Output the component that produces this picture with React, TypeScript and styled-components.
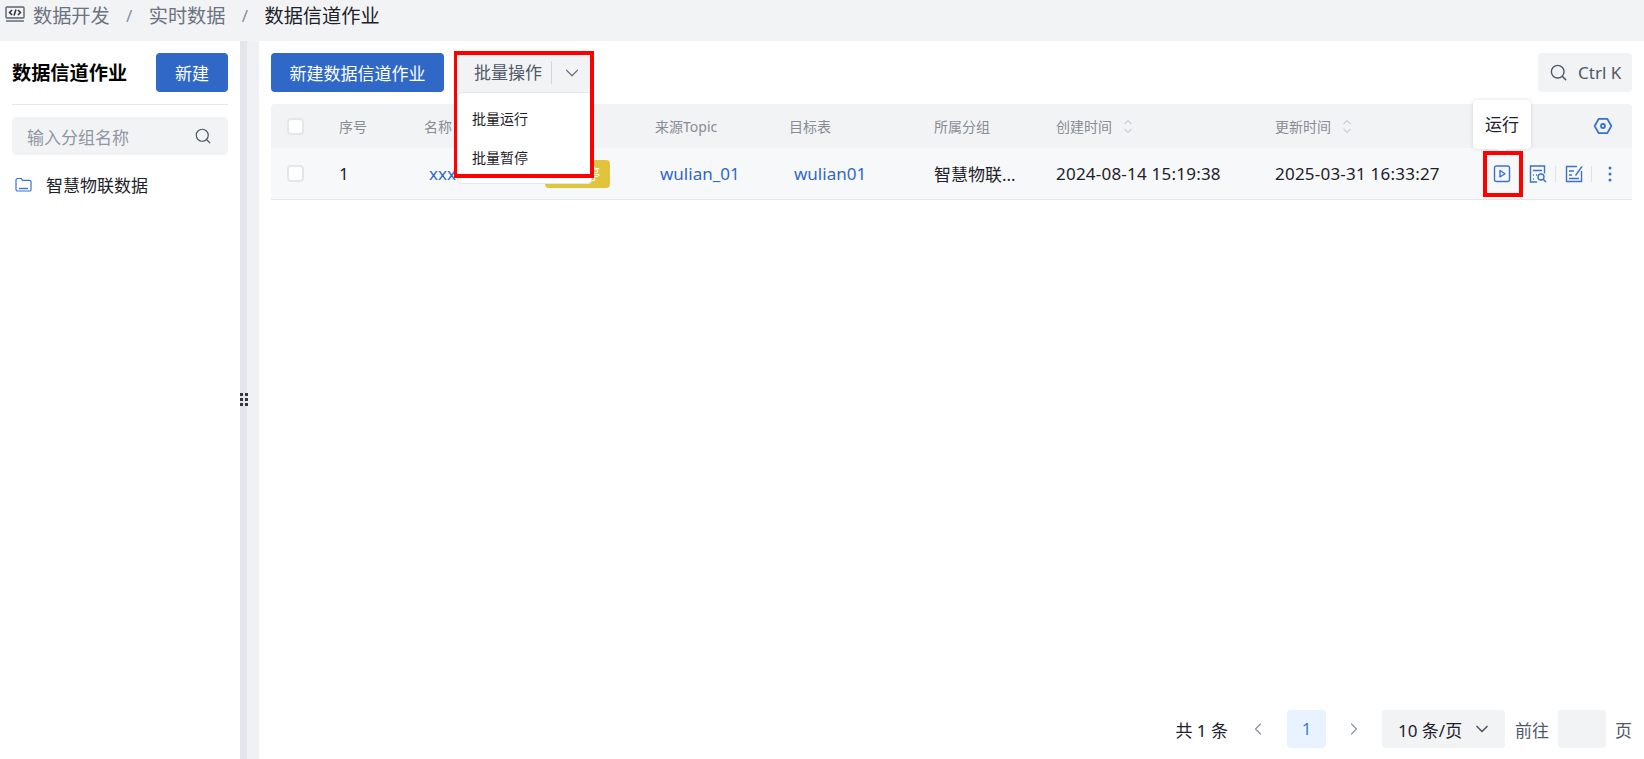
import { createGlobalStyle, styled } from 'styled-components';
import { ChevronDown, ChevronLeft, ChevronRight, Search } from 'lucide-react';

const GlobalStyle = createGlobalStyle`
    html, body {
        margin: 0;
        height: 100%;
        overflow: hidden;
    }
    body {
        font-family: "Noto Sans", "Noto Sans CJK SC", sans-serif;
        color: #1d2129;
    }
`;

const COLUMNS = '52px 85px 121px 110px 134px 145px 122px 219px 220px 153px';
const BLUE = '#2f68c6';
const ICON_BLUE = '#3a72cc';

const Page = styled.div`
    width: 1644px;
    height: 759px;
    background: #f2f3f5;
    display: flex;
    flex-direction: column;
`;

const Crumbs = styled.nav`
    height: 41px;
    flex: none;
    box-sizing: border-box;
    padding: 0 0 11px 5px;
    display: flex;
    align-items: center;
    font-size: 19.2px;
    color: #6b7280;
    svg {
        margin-right: 8px;
    }
`;

const Crumb = styled.span<{ $current?: boolean }>`
    color: ${(p) => (p.$current ? '#1d2129' : '#6b7280')};
`;

const CrumbSep = styled.span`
    width: 39px;
    text-align: center;
    color: #86909c;
    font-size: 17px;
`;

const Body = styled.div`
    flex: 1;
    display: flex;
    min-height: 0;
`;

const Sidebar = styled.aside`
    width: 240px;
    flex: none;
    box-sizing: border-box;
    background: #fff;
    padding: 12px 12px 0;
`;

const SideHead = styled.div`
    height: 39px;
    padding-bottom: 12px;
    border-bottom: 1px solid #e5e6eb;
    display: flex;
    align-items: flex-start;
    justify-content: space-between;
`;

const SideTitle = styled.h2`
    margin: 0;
    line-height: 39px;
    font-size: 19.2px;
    font-weight: 700;
    color: #000;
`;

const PrimaryButton = styled.button<{ $wide?: boolean }>`
    height: 39px;
    width: ${(p) => (p.$wide ? '173px' : '72px')};
    border: 0;
    border-radius: 4px;
    background: ${BLUE};
    color: #fff;
    font: inherit;
    font-size: 17px;
    padding: 0;
`;

const SideSearch = styled.div`
    height: 38px;
    margin-top: 12px;
    box-sizing: border-box;
    padding: 0 16px 0 15px;
    border-radius: 4px;
    background: #f2f3f5;
    display: flex;
    align-items: center;
    justify-content: space-between;
    font-size: 17px;
    color: #9097a3;
    svg {
        color: #4e5969;
    }
`;

const TreeItem = styled.div`
    margin-top: 11px;
    height: 36px;
    display: flex;
    align-items: center;
    gap: 14px;
    padding-left: 3px;
    font-size: 17px;
    color: #1d2129;
`;

const Splitter = styled.div`
    width: 19px;
    flex: none;
    display: flex;
    position: relative;
`;

const SplitLeft = styled.div`
    width: 7px;
    background: #e3e5ec;
`;

const SplitRight = styled.div`
    flex: 1;
    background: #f0f1f5;
`;

const Grip = styled.div`
    position: absolute;
    left: 0;
    top: 352px;
    display: grid;
    grid-template-columns: 3px 3px;
    gap: 2px;
    i {
        width: 3px;
        height: 3px;
        background: #33363d;
    }
`;

const Main = styled.main`
    flex: 1;
    min-width: 0;
    background: #fff;
    box-sizing: border-box;
    padding: 12px 12px 0;
    display: flex;
    flex-direction: column;
`;

const Toolbar = styled.div`
    height: 39px;
    flex: none;
    display: flex;
    align-items: center;
    gap: 13px;
`;

const BatchGroup = styled.div`
    position: relative;
    height: 39px;
    width: 135px;
    background: #f2f3f5;
    border-radius: 4px;
    display: flex;
    align-items: center;
    box-sizing: border-box;
    padding-left: 17px;
    font-size: 17px;
    color: #4e5969;
    z-index: 3;
`;

const BatchLabel = styled.span`
    padding-right: 9px;
    border-right: 1px solid #d4d6dc;
    line-height: 23px;
`;

const BatchCaret = styled.span`
    display: flex;
    margin-left: 9px;
    color: #6b7280;
`;

const Menu = styled.div`
    position: absolute;
    left: 0;
    top: 39px;
    width: 135px;
    height: 92px;
    box-sizing: border-box;
    background: #fff;
    border: 1px solid #e5e6eb;
    border-radius: 4px;
    padding: 6px 0;
`;

const MenuItem = styled.div`
    height: 39px;
    line-height: 39px;
    padding-left: 14px;
    font-size: 14px;
    color: #1d2129;
`;

const RedFrame = styled.div`
    position: absolute;
    box-sizing: border-box;
    border: 4px solid #f00;
    pointer-events: none;
    z-index: 5;
`;

const BatchFrame = styled(RedFrame)`
    left: -3px;
    top: -2px;
    width: 140px;
    height: 127px;
    border-left-width: 3px;
`;

const Spacer = styled.div`
    flex: 1;
`;

const QuickSearch = styled.div`
    width: 94px;
    height: 39px;
    box-sizing: border-box;
    padding-left: 11px;
    border-radius: 4px;
    background: #f2f3f5;
    display: flex;
    align-items: center;
    gap: 10px;
    font-size: 17px;
    color: #4e5969;
`;

const Table = styled.div`
    margin-top: 12px;
`;

const HeadRow = styled.div`
    display: grid;
    grid-template-columns: ${COLUMNS};
    height: 44px;
    align-items: center;
    background: #f2f3f5;
    border-radius: 4px 4px 0 0;
    font-size: 14px;
    color: #888c94;
`;

const DataRow = styled.div`
    display: grid;
    grid-template-columns: ${COLUMNS};
    height: 52px;
    box-sizing: border-box;
    align-items: center;
    background: #f7f8fa;
    border-bottom: 1px solid #e5e6eb;
    font-size: 17px;
    color: #1d2129;
`;

const Cell = styled.div`
    padding-left: 16px;
    min-width: 0;
    white-space: nowrap;
    display: flex;
    align-items: center;
`;

const DateCell = styled(Cell)`
    letter-spacing: 0.22px;
`;

const CheckCell = styled.div`
    padding-left: 16px;
    display: flex;
`;

const Check = styled.span`
    width: 13px;
    height: 13px;
    background: #fff;
    border: 2px solid #e5e6eb;
    border-radius: 4px;
`;

const LinkText = styled.span`
    color: ${BLUE};
    padding-left: 5px;
`;

const StatusTag = styled.span`
    height: 28px;
    width: 65px;
    border-radius: 4px;
    background: #e2c43c;
    color: #fff;
    font-size: 15px;
    line-height: 26px;
    text-align: center;
`;

const SortIcon = styled.svg`
    margin-left: 11px;
`;

const Actions = styled.div`
    display: flex;
    align-items: center;
    padding-left: 14px;
    color: ${BLUE};
`;

const ActionButton = styled.span`
    position: relative;
    display: flex;
    width: 18px;
    height: 18px;
`;

const ActionSep = styled.span<{ $hidden?: boolean }>`
    width: 1px;
    height: 16px;
    background: ${(p) => (p.$hidden ? 'transparent' : '#e0e2e7')};
    margin: 1px 9px 0 8px;
`;

const PlayFrame = styled(RedFrame)`
    left: -10px;
    top: -14px;
    width: 40px;
    height: 46px;
`;

const Tooltip = styled.div`
    position: absolute;
    left: -20px;
    top: -65px;
    width: 58px;
    height: 49px;
    box-sizing: border-box;
    background: #fff;
    border-radius: 4px;
    box-shadow: 0 0 4px rgba(0, 0, 0, 0.14);
    color: #1d2129;
    font-size: 17px;
    line-height: 49px;
    text-align: center;
    z-index: 4;
    &::after {
        content: '';
        position: absolute;
        left: 25px;
        bottom: -3px;
        width: 8px;
        height: 8px;
        background: #fff;
        transform: rotate(45deg);
    }
`;

const GearCell = styled.div`
    display: flex;
    justify-content: flex-end;
    padding-right: 19px;
`;

const Pager = styled.footer`
    margin-top: auto;
    height: 38px;
    margin-bottom: 11px;
    display: flex;
    align-items: center;
    justify-content: flex-end;
    font-size: 17px;
    color: #1d2129;
`;

const PagerArrow = styled.span<{ $gap: number }>`
    display: flex;
    color: #9097a3;
    margin-left: ${(p) => p.$gap}px;
`;

const PageNumber = styled.span`
    width: 39px;
    height: 38px;
    margin-left: 19px;
    border-radius: 4px;
    background: #e8f3ff;
    color: #3b7dd8;
    text-align: center;
    line-height: 38px;
`;

const PageSize = styled.div`
    width: 123px;
    height: 38px;
    margin-left: 18px;
    box-sizing: border-box;
    padding: 0 13px 0 16px;
    border-radius: 4px;
    background: #f2f3f5;
    display: flex;
    align-items: center;
    justify-content: space-between;
    svg {
        color: #4e5969;
    }
`;

const PagerText = styled.span<{ $gap: number }>`
    margin-left: ${(p) => p.$gap}px;
    color: #4e5969;
`;

const JumpInput = styled.span`
    width: 48px;
    height: 38px;
    margin-left: 9px;
    border-radius: 4px;
    background: #f2f3f5;
`;

const MonitorIcon = () => (
    <svg width="20" height="20" viewBox="0 0 20 20" fill="none" stroke="#5a6270" strokeWidth="1.4">
        <rect x="1" y="2" width="18" height="11" rx="1" />
        <path d="M1 16h18" />
        <path d="M7 5 4.600 7.500 7 10M13 5l2.400 2.500L13 10M11 4.500 9 10.500" strokeWidth="1.6" stroke="#33363d" />
    </svg>
);

const FolderIcon = () => (
    <svg width="17" height="15" viewBox="0 0 17 15" fill="none" stroke="#3b72d0" strokeWidth="1.2">
        <path d="M1 3a1.500 1.500 0 0 1 1.500-1.500h3.700l1.500 1.800h6.800A1.500 1.500 0 0 1 16 4.800v7.700a1.500 1.500 0 0 1-1.500 1.500h-12A1.500 1.500 0 0 1 1 12.500z" />
        <path d="M4 11.500h9" strokeWidth="1.4" />
    </svg>
);

const SortArrows = () => (
    <SortIcon width="10" height="15" viewBox="0 0 10 15" fill="none" stroke="#c9cdd4" strokeWidth="1.1">
        <path d="M1.500 5 5 1.500 8.500 5M1.500 10 5 13.500 8.500 10" />
    </SortIcon>
);

const GearIcon = () => (
    <svg width="20" height="20" viewBox="0 0 18 18" fill="none" stroke={ICON_BLUE} strokeWidth="1.600">
        <path d="M5.200 2.500h7.600L16.500 9l-3.700 6.500H5.200L1.500 9z" strokeLinejoin="round" />
        <circle cx="9" cy="9" r="1.800" />
    </svg>
);

const PlayIcon = () => (
    <svg width="18" height="18" viewBox="0 0 18 18" fill="none" stroke={ICON_BLUE} strokeWidth="1.400">
        <rect x="1.500" y="1" width="15" height="15.500" rx="2" />
        <path d="M7 5.500v6.500l5-3.250z" strokeLinejoin="round" />
    </svg>
);

const DetailIcon = () => (
    <svg width="18" height="18" viewBox="0 0 18 18" fill="none" stroke={ICON_BLUE} strokeWidth="1.400">
        <path d="M8 17H1.500V1h14v7.500" />
        <path d="M4 5.500h9M4 10h1M7 10h1M4 14h1" />
        <circle cx="12" cy="12" r="3" />
        <path d="m14.200 14.200 2.800 2.800" strokeWidth="1.500" />
    </svg>
);

const EditIcon = () => (
    <svg width="18" height="18" viewBox="0 0 18 18" fill="none" stroke={ICON_BLUE} strokeWidth="1.400">
        <path d="M12 1.500H1.500v15h15V6" />
        <path d="M4 6h5M4 10h3M4 13.500h10M10.500 10.500 17 1.500" />
    </svg>
);

const MoreIcon = () => (
    <svg width="18" height="18" viewBox="0 0 18 18" fill={ICON_BLUE}>
        <circle cx="9" cy="3" r="1.500" />
        <circle cx="9" cy="9" r="1.500" />
        <circle cx="9" cy="15" r="1.500" />
    </svg>
);

const App = () => {
    return (
        <Page>
            <GlobalStyle />
            <Crumbs>
                <MonitorIcon />
                <Crumb>数据开发</Crumb>
                <CrumbSep>/</CrumbSep>
                <Crumb>实时数据</Crumb>
                <CrumbSep>/</CrumbSep>
                <Crumb $current>数据信道作业</Crumb>
            </Crumbs>
            <Body>
                <Sidebar>
                    <SideHead>
                        <SideTitle>数据信道作业</SideTitle>
                        <PrimaryButton>新建</PrimaryButton>
                    </SideHead>
                    <SideSearch>
                        输入分组名称
                        <Search size={18} strokeWidth={1.6} />
                    </SideSearch>
                    <TreeItem>
                        <FolderIcon />
                        智慧物联数据
                    </TreeItem>
                </Sidebar>
                <Splitter>
                    <SplitLeft />
                    <SplitRight />
                    <Grip>
                        <i />
                        <i />
                        <i />
                        <i />
                        <i />
                        <i />
                    </Grip>
                </Splitter>
                <Main>
                    <Toolbar>
                        <PrimaryButton $wide>新建数据信道作业</PrimaryButton>
                        <BatchGroup>
                            <BatchLabel>批量操作</BatchLabel>
                            <BatchCaret>
                                <ChevronDown size={22} strokeWidth={1.3} />
                            </BatchCaret>
                            <Menu>
                                <MenuItem>批量运行</MenuItem>
                                <MenuItem>批量暂停</MenuItem>
                            </Menu>
                            <BatchFrame />
                        </BatchGroup>
                        <Spacer />
                        <QuickSearch>
                            <Search size={19} strokeWidth={1.8} />
                            Ctrl K
                        </QuickSearch>
                    </Toolbar>
                    <Table>
                        <HeadRow>
                            <CheckCell>
                                <Check />
                            </CheckCell>
                            <Cell>序号</Cell>
                            <Cell>名称</Cell>
                            <Cell />
                            <Cell>来源Topic</Cell>
                            <Cell>目标表</Cell>
                            <Cell>所属分组</Cell>
                            <Cell>
                                创建时间
                                <SortArrows />
                            </Cell>
                            <Cell>
                                更新时间
                                <SortArrows />
                            </Cell>
                            <GearCell>
                                <GearIcon />
                            </GearCell>
                        </HeadRow>
                        <DataRow>
                            <CheckCell>
                                <Check />
                            </CheckCell>
                            <Cell>1</Cell>
                            <Cell>
                                <LinkText>xxx</LinkText>
                            </Cell>
                            <Cell>
                                <StatusTag>已暂停</StatusTag>
                            </Cell>
                            <Cell>
                                <LinkText>wulian_01</LinkText>
                            </Cell>
                            <Cell>
                                <LinkText>wulian01</LinkText>
                            </Cell>
                            <Cell>智慧物联...</Cell>
                            <DateCell>2024-08-14 15:19:38</DateCell>
                            <DateCell>2025-03-31 16:33:27</DateCell>
                            <Actions>
                                <ActionButton>
                                    <PlayIcon />
                                    <Tooltip>运行</Tooltip>
                                    <PlayFrame />
                                </ActionButton>
                                <ActionSep $hidden />
                                <ActionButton>
                                    <DetailIcon />
                                </ActionButton>
                                <ActionSep />
                                <ActionButton>
                                    <EditIcon />
                                </ActionButton>
                                <ActionSep />
                                <ActionButton>
                                    <MoreIcon />
                                </ActionButton>
                            </Actions>
                        </DataRow>
                    </Table>
                    <Pager>
                        共 1 条
                        <PagerArrow $gap={20}>
                            <ChevronLeft size={20} strokeWidth={1.5} />
                        </PagerArrow>
                        <PageNumber>1</PageNumber>
                        <PagerArrow $gap={18}>
                            <ChevronRight size={20} strokeWidth={1.5} />
                        </PagerArrow>
                        <PageSize>
                            10 条/页
                            <ChevronDown size={20} strokeWidth={2} />
                        </PageSize>
                        <PagerText $gap={10}>前往</PagerText>
                        <JumpInput />
                        <PagerText $gap={9}>页</PagerText>
                    </Pager>
                </Main>
            </Body>
        </Page>
    );
};

export default App;
